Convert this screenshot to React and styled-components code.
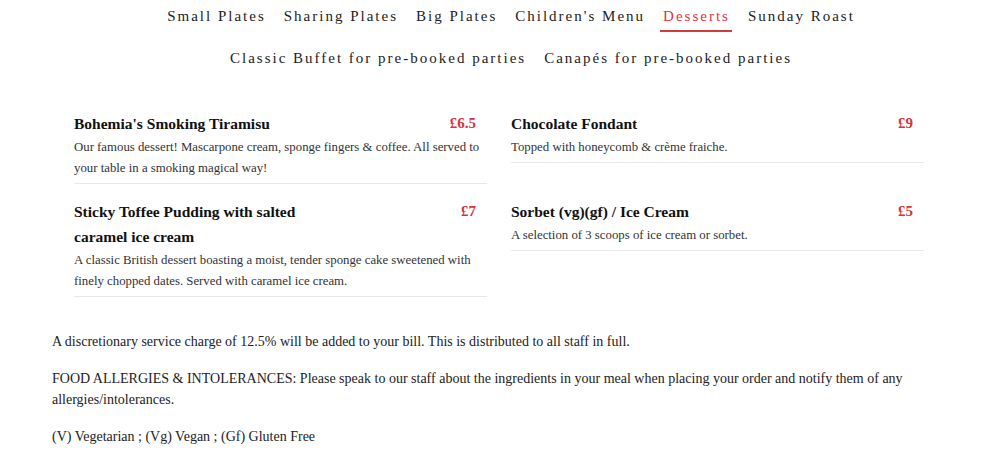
import React from "react";
import styled, { createGlobalStyle } from "styled-components";

const GlobalStyle = createGlobalStyle`
  html, body {
    margin: 0;
    padding: 0;
    background: #fff;
  }
  body {
    font-family: "Liberation Serif", "DejaVu Serif", serif;
    color: #222;
  }
`;

const navRows = [
  ["Small Plates", "Sharing Plates", "Big Plates", "Children's Menu", "Desserts", "Sunday Roast"],
  ["Classic Buffet for pre-booked parties", "Canapés for pre-booked parties"],
];

const dishes = [
  {
    name: "Bohemia's Smoking Tiramisu",
    price: "£6.5",
    desc: "Our famous dessert! Mascarpone cream, sponge fingers & coffee. All served to your table in a smoking magical way!",
  },
  {
    name: "Chocolate Fondant",
    price: "£9",
    desc: "Topped with honeycomb & crème fraiche.",
  },
  {
    name: "Sticky Toffee Pudding with salted caramel ice cream",
    price: "£7",
    desc: "A classic British dessert boasting a moist, tender sponge cake sweetened with finely chopped dates. Served with caramel ice cream.",
  },
  {
    name: "Sorbet (vg)(gf) / Ice Cream",
    price: "£5",
    desc: "A selection of 3 scoops of ice cream or sorbet.",
  },
];

function App() {
  return (
    <>
      <GlobalStyle />
      <Page>
        <Nav>
          {navRows.map((row, i) => (
            <NavRow key={i}>
              {row.map((label) => (
                <NavItem key={label} $active={label === "Desserts"}>
                  {label}
                </NavItem>
              ))}
            </NavRow>
          ))}
        </Nav>

        <MenuGrid>
          {dishes.map((d) => (
            <Dish key={d.name}>
              <DishHead>
                <DishName>{d.name}</DishName>
                <Price>{d.price}</Price>
              </DishHead>
              <Desc>{d.desc}</Desc>
            </Dish>
          ))}
        </MenuGrid>

        <Notes>
          <Note>
            A discretionary service charge of 12.5% will be added to your bill. This is distributed to all staff in full.
          </Note>
          <Note>
            FOOD ALLERGIES &amp; INTOLERANCES: Please speak to our staff about the ingredients in your meal when placing your order and notify them of any allergies/intolerances.
          </Note>
          <Note>(V) Vegetarian ; (Vg) Vegan ; (Gf) Gluten Free</Note>
        </Notes>
      </Page>
    </>
  );
}

export default App;

const Page = styled.div`
  width: 1001px;
`;

const Nav = styled.nav`
  display: flex;
  flex-direction: column;
  align-items: center;
  padding: 5px 0 0 20px;
`;

const NavRow = styled.div`
  display: flex;
  justify-content: center;
  height: 42px;
`;

const NavItem = styled.a`
  font-size: 15px;
  letter-spacing: 2px;
  color: ${(p) => (p.$active ? "#dc3545" : "#222")};
  margin: 0 6.5px;
  height: 25px;
  line-height: 22px;
  border-bottom: 2px solid ${(p) => (p.$active ? "#d33a3a" : "transparent")};
  padding: 0 2px 0 3px;
  cursor: pointer;
`;

const MenuGrid = styled.div`
  display: grid;
  grid-template-columns: 413px 413px;
  column-gap: 24px;
  row-gap: 15px;
  padding: 22px 0 0 74px;
`;

const Dish = styled.div`
  border-bottom: 1px solid #e8e8e8;
  padding-bottom: 4px;
  align-self: start;
`;

const DishHead = styled.div`
  display: flex;
  justify-content: space-between;
  align-items: flex-start;
  padding-right: 11px;
`;

const DishName = styled.h3`
  margin: 0;
  font-size: 15.5px;
  font-weight: bold;
  line-height: 25px;
  color: #111;
  max-width: 240px;
`;

const Price = styled.span`
  font-size: 15px;
  font-weight: bold;
  line-height: 25px;
  color: #d8323c;
`;

const Desc = styled.p`
  margin: 1px 0 0;
  font-size: 12.8px;
  line-height: 21px;
  color: #333;
`;

const Notes = styled.div`
  padding: 34px 50px 0 52px;
`;

const Note = styled.p`
  margin: 0 0 16px;
  font-size: 14px;
  line-height: 21px;
  color: #222;
`;
